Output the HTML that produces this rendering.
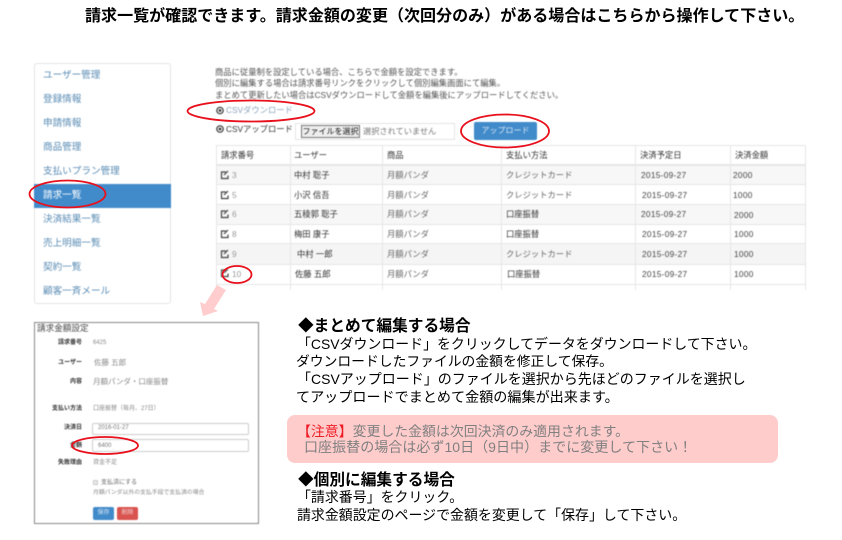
<!DOCTYPE html>
<html lang="ja"><head><meta charset="utf-8"><style>
*{box-sizing:border-box}
html,body{margin:0;padding:0;background:#fff}
body{width:842px;height:540px;position:relative;overflow:hidden;font-family:"Liberation Sans","Noto Sans CJK JP",sans-serif;color:#000}
.t{position:absolute;white-space:nowrap;line-height:1}
.s{filter:blur(.45px)}
#nav{position:absolute;left:34px;top:63px;width:137px;height:241px;border:1px solid #e3e3e3;border-radius:3px;background:#fff}
#nav div{position:absolute;left:8px;font-size:9.6px;line-height:1;color:#5b8db5;white-space:nowrap}
#act{position:absolute;left:34px;top:184px;width:137px;height:24px;background:#428bca}
.l{position:absolute;background:#e6e6e6}
.r{position:absolute;left:216px;width:590px}
.t.c{font-size:8.300px;line-height:10px;color:#333}
.t.c.d{letter-spacing:.3px;color:#444}
.t.c.g{color:#666}
.t.c.n{left:232px;color:#999}
.inp{position:absolute;left:92px;width:157px;border:1px solid #ccc;border-radius:2px;background:#fff}
.k{font-size:6px;color:#333;font-weight:bold;right:760px;line-height:8px}
.v{font-size:6px;color:#888;left:93px;line-height:8px}
</style></head><body>

<div class="t" style="left:85px;top:8px;font-size:16.050px;font-weight:bold">請求一覧が確認できます。請求金額の変更（次回分のみ）がある場合はこちらから操作して下さい。</div>

<div class="s">
<div id="nav">
<div style="top:7px">ユーザー管理</div><div style="top:31px">登録情報</div><div style="top:55px">申請情報</div><div style="top:79px">商品管理</div><div style="top:103px">支払いプラン管理</div><div style="top:151px">決済結果一覧</div><div style="top:175px">売上明細一覧</div><div style="top:199px">契約一覧</div><div style="top:223px">顧客一斉メール</div>
</div>
<div id="act"></div>
<div class="t" style="left:43px;top:191px;font-size:9.600px;color:#fff">請求一覧</div>

<div class="t" style="left:215px;top:68px;font-size:8.300px;color:#555">商品に従量制を設定している場合、こちらで金額を設定できます。</div>
<div class="t" style="left:215px;top:79px;font-size:8.300px;color:#555">個別に編集する場合は請求番号リンクをクリックして個別編集画面にて編集。</div>
<div class="t" style="left:215px;top:91px;font-size:8.300px;color:#555">まとめて更新したい場合はCSVダウンロードして金額を編集後にアップロードしてください。</div>
<svg style="position:absolute;left:215px;top:105px" width="10" height="30" fill="none" stroke="#333" stroke-width="1.200"><circle cx="5" cy="5.500" r="3.200"/><circle cx="5" cy="24" r="3.200"/><circle cx="5" cy="5.500" r=".8" fill="#333"/><circle cx="5" cy="24" r=".8" fill="#333"/></svg>
<div class="t" style="left:226px;top:106px;font-size:8.300px;color:#8ba3bb">CSVダウンロード</div>
<div class="t" style="left:226px;top:125px;font-size:8.300px;color:#333">CSVアップロード</div>
<div style="position:absolute;left:295px;top:123px;width:160px;height:17px;border:1px solid #e4e4e4"></div>
<div class="t" style="left:301px;top:125px;width:59px;height:13px;border:1px solid #777;background:#eee;font-size:8px;text-align:center;line-height:11px;color:#111">ファイルを選択</div>
<div class="t" style="left:363px;top:128px;font-size:8.200px;color:#777">選択されていません</div>
<div class="t" style="left:474px;top:122px;width:63px;height:18px;background:#428bca;border-radius:2px;font-size:8px;color:#dbe8f5;text-align:center;line-height:18px">アップロード</div>

<div class="r" style="top:164px;height:21px;background:#f7f7f7"></div>
<div class="r" style="top:204px;height:20px;background:#f7f7f7"></div>
<div class="r" style="top:243px;height:21px;background:#f5f5f5"></div>
<div class="l" style="left:216px;top:145px;width:590px;height:1px"></div>
<div class="l" style="left:216px;top:164px;width:590px;height:2px"></div>
<div class="l" style="left:216px;top:184px;width:590px;height:1px"></div>
<div class="l" style="left:216px;top:204px;width:590px;height:1px"></div>
<div class="l" style="left:216px;top:224px;width:590px;height:1px"></div>
<div class="l" style="left:216px;top:243px;width:590px;height:1px"></div>
<div class="l" style="left:216px;top:264px;width:590px;height:1px"></div>
<div class="l" style="left:216px;top:284px;width:590px;height:1px"></div>
<div class="l" style="left:216px;top:145px;width:1px;height:145px"></div>
<div class="l" style="left:290px;top:145px;width:1px;height:145px"></div>
<div class="l" style="left:382px;top:145px;width:1px;height:145px"></div>
<div class="l" style="left:501px;top:145px;width:1px;height:145px"></div>
<div class="l" style="left:635px;top:145px;width:1px;height:145px"></div>
<div class="l" style="left:730px;top:145px;width:1px;height:145px"></div>
<div class="l" style="left:805px;top:145px;width:1px;height:145px"></div>

<div class="t c" style="left:221px;top:150px">請求番号</div><div class="t c" style="left:294px;top:150px">ユーザー</div><div class="t c" style="left:387px;top:150px">商品</div><div class="t c" style="left:506px;top:150px">支払い方法</div><div class="t c" style="left:640px;top:150px">決済予定日</div><div class="t c" style="left:735px;top:150px">決済金額</div>

<div class="t c" style="left:294px;top:170px">中村 聡子</div><div class="t c g" style="left:387px;top:170px">月額パンダ</div><div class="t c g" style="left:506px;top:170px">クレジットカード</div><div class="t c d" style="left:641px;top:170px">2015-09-27</div><div class="t c d" style="left:733px;top:170px">2000</div>
<div class="t c" style="left:294px;top:190px">小沢 信吾</div><div class="t c g" style="left:387px;top:190px">月額パンダ</div><div class="t c g" style="left:506px;top:190px">クレジットカード</div><div class="t c d" style="left:642px;top:190px">2015-09-27</div><div class="t c d" style="left:733px;top:190px">1000</div>
<div class="t c" style="left:294px;top:209px">五稜郭 聡子</div><div class="t c g" style="left:387px;top:209px">月額パンダ</div><div class="t c" style="left:506px;top:209px">口座振替</div><div class="t c d" style="left:641px;top:209px">2015-09-27</div><div class="t c d" style="left:734px;top:210px">2000</div>
<div class="t c" style="left:294px;top:229px">梅田 康子</div><div class="t c g" style="left:387px;top:229px">月額パンダ</div><div class="t c" style="left:506px;top:229px">口座振替</div><div class="t c d" style="left:642px;top:229px">2015-09-27</div><div class="t c d" style="left:734px;top:229px">1000</div>
<div class="t c" style="left:297px;top:249px">中村 一郎</div><div class="t c g" style="left:387px;top:249px">月額パンダ</div><div class="t c g" style="left:506px;top:249px">クレジットカード</div><div class="t c d" style="left:642px;top:249px">2015-09-27</div><div class="t c d" style="left:734px;top:249px">1000</div>
<div class="t c" style="left:295px;top:269px">佐藤 五郎</div><div class="t c g" style="left:387px;top:269px">月額パンダ</div><div class="t c" style="left:507px;top:269px">口座振替</div><div class="t c d" style="left:642px;top:269px">2015-09-27</div><div class="t c d" style="left:734px;top:269px">1000</div>

<div class="t c n" style="top:170px">3</div><div class="t c n" style="top:190px">5</div><div class="t c n" style="top:209px">6</div><div class="t c n" style="top:229px">8</div><div class="t c n" style="top:249px">9</div><div class="t c n" style="top:269px">10</div>
<svg style="position:absolute;left:0;top:0" width="842" height="540" fill="none" stroke="#444" stroke-width="1.200"><path d="M226 172h-4.500v6.500h6.500v-3M224 175l4-4"/><path d="M226 192h-4.500v6.500h6.500v-3M224 195l4-4"/><path d="M226 211h-4.500v6.500h6.500v-3M224 214l4-4"/><path d="M226 231h-4.500v6.500h6.500v-3M224 234l4-4"/><path d="M226 251h-4.500v6.500h6.500v-3M224 254l4-4"/><path d="M226 270h-4.500v6.500h6.500v-3M224 273l4-4"/></svg>

<div style="position:absolute;left:34px;top:322px;width:225px;height:202px;border:1px solid #888;background:#fff"></div>
<div class="t" style="left:37px;top:324px;font-size:8.600px;color:#444">請求金額設定</div>
<div class="t k" style="top:339px">請求番号</div><div class="t v" style="top:339px">6425</div>
<div class="t k" style="top:359px">ユーザー</div><div class="t v" style="left:94px;top:359px;font-size:7.500px">佐藤 五郎</div>
<div class="t k" style="top:378px">内容</div><div class="t v" style="top:378px;font-size:7.500px">月額パンダ・口座振替</div>
<div class="t k" style="top:405px">支払い方法</div><div class="t v" style="top:405px">口座振替（毎月、27日）</div>
<div class="t k" style="top:424px">決済日</div><div class="inp" style="top:423px;height:12px"></div><div class="t v" style="left:98px;top:424px;color:#777">2016-01-27</div>
<div class="t k" style="top:442px">金額</div><div class="inp" style="top:439px;height:13px"></div><div class="t v" style="left:98px;top:442px;color:#777">6400</div>
<div class="t k" style="top:459px">失敗理由</div><div class="t v" style="top:459px">資金不足</div>
<div style="position:absolute;left:93px;top:480px;width:5px;height:5px;border:1px solid #ccc;background:#e8e8e8"></div>
<div class="t v" style="left:101px;top:479px;color:#666">支払済にする</div>
<div class="t v" style="top:489px;font-size:5.850px">月額パンダ以外の支払手段で支払済の場合</div>
<div class="t" style="left:93px;top:507px;width:21px;height:13px;background:#428bca;border-radius:2px;color:#dbe8f5;font-size:6px;text-align:center;line-height:13px">保存</div>
<div class="t" style="left:117px;top:507px;width:21px;height:13px;background:#d9534f;border-radius:2px;color:#f5dada;font-size:6px;text-align:center;line-height:13px">削除</div>
</div>

<div style="position:absolute;left:287px;top:415px;width:491px;height:48px;background:#ffcccc;border-radius:8px"></div>

<svg style="position:absolute;left:0;top:0" width="842" height="540" fill="none" stroke="#e8101c" stroke-width="1.800">
<polygon points="217,285 226,290 214,309 218,311 203,316 200,302 205,304" fill="#ffcdcd" stroke="none"/>
<ellipse cx="67.500" cy="194" rx="38" ry="13.500"/>
<ellipse cx="251" cy="111" rx="63.500" ry="10.500"/>
<ellipse cx="505" cy="131" rx="44" ry="16.500"/>
<ellipse cx="237" cy="274.500" rx="14.500" ry="8.500"/>
<ellipse cx="105" cy="445.500" rx="33" ry="8.500"/>
</svg>

<div class="t" style="left:298px;top:319px;font-size:15.700px;font-weight:bold">◆まとめて編集する場合</div>
<div class="t" style="left:297px;top:338px;font-size:13.930px">「CSVダウンロード」をクリックしてデータをダウンロードして下さい。</div>
<div class="t" style="left:296px;top:355px;font-size:13.800px">ダウンロードしたファイルの金額を修正して保存。</div>
<div class="t" style="left:297px;top:372px;font-size:14px">「CSVアップロード」のファイルを選択から先ほどのファイルを選択し</div>
<div class="t" style="left:296px;top:390px;font-size:14.100px">てアップロードでまとめて金額の編集が出来ます。</div>
<div class="t" style="left:297px;top:425px;font-size:13.900px;color:#808080"><span style="color:#ee1c25">【注意】</span>変更した金額は次回決済のみ適用されます。</div>
<div class="t" style="left:304px;top:440px;font-size:14.050px;color:#808080">口座振替の場合は必ず10日（9日中）までに変更して下さい！</div>
<div class="t" style="left:298px;top:473px;font-size:15.700px;font-weight:bold">◆個別に編集する場合</div>
<div class="t" style="left:297px;top:491px;font-size:13.940px">「請求番号」をクリック。</div>
<div class="t" style="left:297px;top:509px;font-size:13.940px">請求金額設定のページで金額を変更して「保存」して下さい。</div>
</body></html>
